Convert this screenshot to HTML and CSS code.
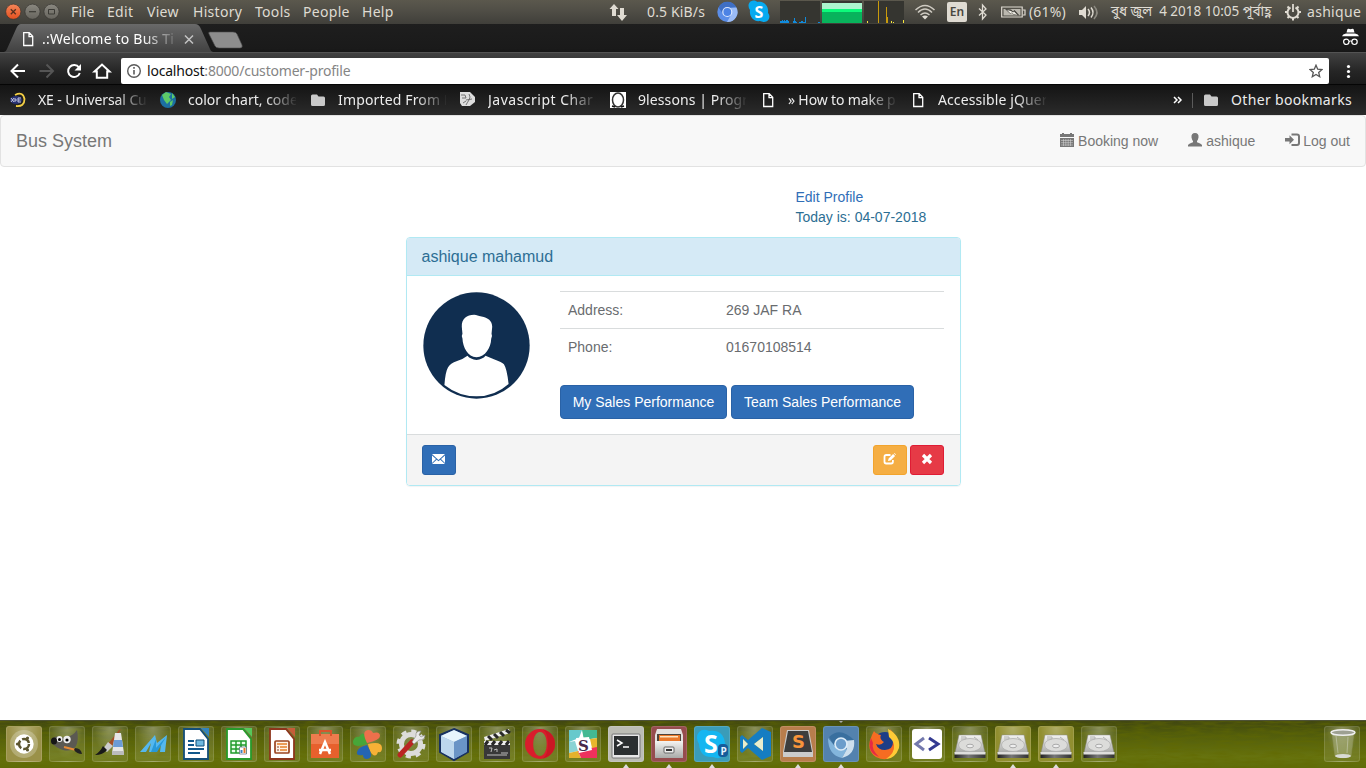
FILE: index.html
```html
<!DOCTYPE html>
<html lang="en">
<head>
<meta charset="utf-8">
<title>.:Welcome to Bus Ticket</title>
<link rel="stylesheet" href="styles.css">
</head>
<body>
<header class="panel">
  <svg class="winbtns" width="71" height="24" viewBox="0 0 71 24"><defs><linearGradient id="or" x2="0" y2="1"><stop stop-color="#f68659"/><stop offset="1" stop-color="#e3501f"/></linearGradient><linearGradient id="gr" x2="0" y2="1"><stop stop-color="#8a8880"/><stop offset="1" stop-color="#66645d"/></linearGradient></defs><circle cx="13.3" cy="11.7" r="7.6" fill="url(#or)" stroke="#3a3731" stroke-width=".7"/><path d="M10.8 9.2l5 5m0-5l-5 5" stroke="#57301f" stroke-width="1.3"/><circle cx="32.5" cy="11.7" r="7.6" fill="url(#gr)" stroke="#35342f" stroke-width=".7"/><path d="M29 11.7h7" stroke="#3b3a35" stroke-width="1.2"/><circle cx="51.5" cy="11.7" r="7.6" fill="url(#gr)" stroke="#35342f" stroke-width=".7"/><path d="M48.5 9.5h6v4.5h-6z" fill="none" stroke="#3b3a35"/></svg>
  <nav class="menus"><span class="m-file">File</span><span class="m-edit">Edit</span><span class="m-view">View</span><span class="m-history">History</span><span class="m-tools">Tools</span><span class="m-people">People</span><span class="m-help">Help</span></nav>
  <div class="tray">
    <svg class="t-net" width="38" height="24" viewBox="0 0 38 24"><path d="M5 4l4.500 5H7v7H3V9H.5zM11 8h4v7h3l-5 6-5-6h3z" fill="#dfdbd2"/></svg>
    <span class="t-speed">0.5 KiB/s</span>
    <svg width="31" height="24" viewBox="0 0 31 24"><circle cx="10.300" cy="12" r="10" fill="#5b8ee8"/><path d="M1.500 7.500A10 10 0 0 1 19.500 7.500H10L6 14z" fill="#3f6fc4"/><path d="M19.500 7.500A10 10 0 0 1 10 22l5-9-2-5z" fill="#9bbcf7"/><circle cx="10.300" cy="12" r="4.500" fill="#4c83e5" stroke="#dce8ff" stroke-width="1.200"/></svg>
    <svg width="32" height="24" viewBox="0 0 32 24"><path d="M2 2C4 0 8 0 9 2c7-1 12 4 11 11 3 3 1 9-4 9-2 0-3-1-4-1C6 22 1 17 2 10 0 7 0 4 2 2z" fill="#07aaf0"/><text x="6.500" y="17.500" class="glyph-s">S</text></svg>
    <svg width="135" height="24" viewBox="0 0 135 24"><path d="M0 1h40v22H0zM42 1h40v22H42zM84 1h40v22H84z" fill="#353530"/><path d="M0 23v-2h2v-1h1v1h1v-1h1v1h1v-1h2v1h1v2zM13 23v-2h1v-3h1v3h1v1h1v1zM19 23v-1h2v-1h2v1h2v1zM25 23v-6h1v6zM38 23v-1h2v1z" fill="#118bdd"/><path d="M42 3h40v6H42z" fill="#acf5ce"/><path d="M42 9h40v3H42z" fill="#0cfb7b"/><path d="M42 12h40v11H42z" fill="#08b35c"/><path d="M98.500 1v22M106.500 7v16M107.500 17v6" stroke="#c99b0c"/><path d="M87.500 21v2M111.500 21v2M113.500 22v1M123.500 20v3" stroke="#f8e73b"/></svg>
    <svg width="32" height="24" viewBox="0 0 32 24" fill="none" stroke="#cfcbc2" stroke-width="1.500"><path d="M.5 10q9.500-9 19 0M3 12.500q7-7 14 0M5.500 15q4.500-4 9 0"/><path d="M7 16.500q3-2 6 0l-3 3z" fill="#dfdbd2" stroke="none"/></svg>
    <span class="keyboard">En</span>
    <svg width="23" height="24" viewBox="0 0 23 24"><path d="M1 8.500l7 6.500-3.500 4V5L8 9l-7 6.500" fill="none" stroke="#dfdbd2" stroke-width="1.300"/></svg>
    <svg width="28" height="24" viewBox="0 0 28 24"><path d="M.7 7h20.500v10H.7zM22 10h2v5h-2" fill="none" stroke="#dfdbd2" stroke-width="1.200"/><path d="M2.500 9h17v6.500h-17z" fill="#bbb8af"/><path d="M4 9l6 .5 2 2 1.500-1.500 5 5.500-6-1-2-2-1 1.500z" fill="#3f3e39"/><path d="M6 10l4 1 2 1.500 1-1 3.500 3.500-4-1-2-1.500-1 1z" fill="#f0eee6"/></svg>
    <span class="t-batt">(61%)</span>
    <svg width="32" height="24" viewBox="0 0 32 24"><path d="M0 10h3l4-4v13l-4-4H0z" fill="#dfdbd2"/><path d="M9 9q3 3.500 0 7M12 7.500q4 5 0 10" fill="none" stroke="#dfdbd2" stroke-width="1.500"/><path d="M15 6q6 6.500 0 13" fill="none" stroke="#8b8980" stroke-width="1.500"/></svg>
    <span class="t-date">বুধ জুল&nbsp; 4 2018 10:05 পূর্বাহ্ণ</span>
    <svg width="22" height="24" viewBox="0 0 22 24" fill="none" stroke="#dfdbd2"><path d="M5.500 7.500a5.500 5.500 0 1 0 5 0" stroke-width="2"/><path d="M8 4v8" stroke-width="1.800"/><path d="M0 12h3M13 12h3M2.500 6.500l2 2M13.500 6.500l-2 2M2.500 18l2-2M13.500 18l-2-2M8 17.500v3" stroke-width="2"/></svg>
    <span class="t-user">ashique</span>
  </div>
</header>

<section class="tabstrip">
  <svg class="tabshape" width="250" height="28" viewBox="0 0 250 28"><defs><linearGradient id="tb" x2="0" y2="1"><stop stop-color="#696969"/><stop offset="1" stop-color="#414141"/></linearGradient></defs><path d="M4 28q2 0 3-3l9-20q2-5 5-5h174q4 0 6 5l9 20q1 3 3 3z" fill="url(#tb)"/><path d="M210 8h23q3 0 4 2l5 11q1 3-2 3h-21q-3 0-4-2l-6-12q-1-2 1-2z" fill="#8d8d8d" stroke="#4b4b4b" stroke-width=".6"/></svg>
  <svg class="tabpage" width="19" height="28" viewBox="0 0 19 28"><path d="M.7 8.700h5.500l3.500 3.500v9.300h-9zM6 8.700v4h4" fill="none" stroke="#fff" stroke-width="1.300"/></svg>
  <span class="tabtitle">.:Welcome to Bus Ti</span>
  <svg width="12" height="28" viewBox="0 0 12 28"><path d="M1 11.500l8 8m0-8l-8 8" stroke="#c4c4c4" stroke-width="1.500"/></svg>
  <svg class="incognito" width="18" height="28" viewBox="0 0 18 28"><path d="M4.500 8.500l1-3.500q1.500-.5 3 .3 1.500-.8 3-.3l1 3.500zM0 12.300q.5-2 4-2.800h9q3.500.8 4 2.800z" fill="#fff"/><path d="M7 17.500q1.500-1 3 0" fill="none" stroke="#fff"/><circle cx="4.300" cy="17.800" r="2.700" fill="none" stroke="#fff" stroke-width="1.200"/><circle cx="12.500" cy="17.800" r="2.700" fill="none" stroke="#fff" stroke-width="1.200"/></svg>
</section>

<section class="toolbar">
  <svg width="121" height="33" viewBox="0 0 121 33" fill="none" stroke-width="2"><path d="M25 19H12M18 12.500L11.500 19l6.500 6.500" stroke="#fff"/><path d="M39.500 19H52M46.500 12.500L53 19l-6.500 6.500" stroke="#555"/><path d="M79 15.500a6 6 0 1 0 .8 5.500" stroke="#fff"/><path d="M81 12v6.500h-6.500z" fill="#fff"/><path d="M94.500 19.500l7.500-7 7.500 7h-2.300v6.300H96.800v-6.300z" stroke="#fff"/></svg>
  <div class="address">
    <svg width="26" height="26" viewBox="0 0 26 26"><circle cx="13" cy="13" r="6.300" fill="none" stroke="#5a5a5a" stroke-width="1.400"/><path d="M13 9v1.700M13 12v4.500" stroke="#5a5a5a" stroke-width="1.600"/></svg>
    <span class="url"><b>localhost</b>:8000/customer-profile</span>
    <svg class="star" width="14" height="14" viewBox="0 0 14 14"><path d="M7 1.200l1.700 4 4.300.4-3.300 2.800 1 4.300L7 10.400l-3.700 2.300 1-4.300L1 5.600l4.300-.4z" fill="none" stroke="#555" stroke-width="1.300"/></svg>
  </div>
  <svg width="37" height="33" viewBox="0 0 37 33" fill="#fff"><circle cx="19.500" cy="14.500" r="1.600"/><circle cx="19.500" cy="19.500" r="1.600"/><circle cx="19.500" cy="24.500" r="1.600"/></svg>
</section>

<section class="bookmarks">
  <svg class="fav" width="28" height="30" viewBox="0 0 28 30"><path d="M5 10q8-4 9.500 4 0 8-8.500 7" fill="none" stroke="#f4cf45" stroke-width="1.800"/><ellipse cx="6" cy="15" rx="6" ry="4" fill="#283173"/><path d="M1 13l3 4m0-4l-3 4M11 13H8v4h3M8 15h2.500M5 13v4M5 15h2" stroke="#e2e4f5" stroke-width=".8" fill="none"/></svg><span class="bm w1">XE - Universal Cu</span>
  <svg class="fav" width="28" height="30" viewBox="0 0 28 30"><circle cx="8" cy="15" r="8" fill="#1c6fa2"/><path d="M2 10l4-3 5 2-2 3 2 3-4 4-3-4zM10 17l3-2-1 5-2 1zM12 8l3 4-3 2z" fill="#5dc967"/></svg><span class="bm w2">color chart, code</span>
  <svg class="fav" width="28" height="30" viewBox="0 0 28 30"><path d="M1 11q0-1.500 1.500-1.500H7l1.500 2h5q1.500 0 1.500 1.500v6.500q0 1.500-1.500 1.500h-11Q1 21 1 19.500z" fill="#c9c9c9"/></svg><span class="bm w3">Imported From F</span>
  <svg class="fav" width="28" height="30" viewBox="0 0 28 30"><path d="M0 7h10l5 5v5l-5 4H2l-2-3z" fill="#ddd"/><path d="M1 10h4l1 3H2M9 9q2 3 0 6t-3 5M6 15l6-1M3 18l3-2" stroke="#666" stroke-width=".9" fill="none"/></svg><span class="bm w4">Javascript Char</span>
  <svg class="fav" width="28" height="30" viewBox="0 0 28 30"><path d="M0 7h16v16H0z" fill="#fff"/><ellipse cx="8" cy="15" rx="5.500" ry="7" fill="#fff" stroke="#333" stroke-width="1.500"/><path d="M2 21l3 1M11 22l3-1" stroke="#111" stroke-width="1.500"/></svg><span class="bm w5">9lessons | Progr</span>
  <svg class="fav" width="28" height="30" viewBox="0 0 28 30"><path d="M3.700 8.700h5.500l3.500 3.500v9.300h-9zM9 8.700v4h4" fill="none" stroke="#fff" stroke-width="1.300"/></svg><span class="bm w6">» How to make p</span>
  <svg class="fav" width="28" height="30" viewBox="0 0 28 30"><path d="M3.700 8.700h5.500l3.500 3.500v9.300h-9zM9 8.700v4h4" fill="none" stroke="#fff" stroke-width="1.300"/></svg><span class="bm w7">Accessible jQuer</span>
  <div class="others"><svg width="58" height="30" viewBox="0 0 58 30"><path d="M1 12l3 3-3 3M5 12l3 3-3 3" stroke="#fff" fill="none" stroke-width="1.500"/><path d="M19.500 8v15" stroke="#5b5b5b"/><path d="M31 11q0-1.500 1.500-1.500H37l1.500 2h5q1.500 0 1.500 1.500v6.500q0 1.500-1.500 1.500h-11Q31 21 31 19.500z" fill="#c9c9c9"/></svg><span>Other bookmarks</span></div>
</section>

<main class="page">
  <nav class="navbar">
    <a class="brand">Bus System</a>
    <div class="navlinks">
      <a><svg width="14" height="14" viewBox="0 0 14 14"><path d="M0 1h2V0h2v1h6V0h2v1h2v3H0zM0 5h14v9H0z" fill="#777"/><path d="M1 7.500h12M1 9.700h12M1 12h12M3.500 6v7M5.800 6v7M8.200 6v7M10.500 6v7" stroke="#ddd" stroke-width=".5"/></svg> Booking now</a>
      <a><svg width="14" height="14" viewBox="0 0 14 14"><path d="M7 0q4 0 3.500 4.500Q10 7 9 8v1.200q4.500 1.800 5 2.800V13.500H0V12q.5-1 5-2.800V8Q4 7 3.500 4.500 3 0 7 0z" fill="#777"/></svg> ashique</a>
      <a><svg width="15" height="14" viewBox="0 0 15 14"><path d="M6.500 1.500h5.500q2 0 2 2v6.500q0 2-2 2H6.500" fill="none" stroke="#777" stroke-width="2"/><path d="M0 5h4.500V2.300L9 6.800l-4.500 4.500V8.500H0z" fill="#777"/></svg> Log out</a>
    </div>
  </nav>
  <div class="profile">
    <div class="meta"><a>Edit Profile</a><p>Today is: 04-07-2018</p></div>
    <section class="card">
      <h3>ashique mahamud</h3>
      <div class="cardbody">
        <svg class="avatar" width="107" height="107" viewBox="70 337 320 320"><circle cx="230" cy="497" r="159" fill="#102e50"/><path d="M186 441C185 417 201 405 223 405C231 405 235 409 245 410C264 413 277 423 277 441L275 462Q278 467 274 477C273 504 256 532 230 532C204 532 189 502 188 476Q184 468 188 462Z" fill="#fff"/><path d="M203 528q-12 10-31 15-21 7-27 19-8 13-11 53 43 34 96 34 55 0 96-37-5-46-14-59-5-6-30-15-16-6-25-10-9 11-27 12-18-1-27-12z" fill="#fff"/></svg>
        <div class="details">
          <table><tr><td class="label">Address:</td><td>269 JAF RA</td></tr><tr><td class="label">Phone:</td><td>01670108514</td></tr></table>
          <div class="actions"><button>My Sales Performance</button><button>Team Sales Performance</button></div>
        </div>
      </div>
      <footer>
        <a class="sq blue"><svg width="13" height="12" viewBox="0 0 13 12"><path d="M0 1h13L6.500 7zM0 2.500l4 3.500L0 10zM13 2.500L9 6l4 4zM0 11l4.700-4.300 1.800 1.600 1.800-1.600L13 11z" fill="#fff"/></svg></a>
        <div class="right"><a class="sq yellow"><svg width="13" height="12" viewBox="0 0 13 12"><path d="M7.500 2H3.200Q1.500 2 1.500 3.700v5.100q0 1.700 1.700 1.700h5q1.700 0 1.700-1.700V7" fill="none" stroke="#fff" stroke-width="1.800"/><path d="M5 8l.6-2.500 4.500-4.500 2 2L7.500 7.500zM11 .5l.5-.5 1.500 1.500-.6.500z" fill="#fff"/></svg></a><a class="sq red"><svg width="12" height="12" viewBox="0 0 12 12"><path d="M2 2l8 8m0-8l-8 8" stroke="#fff" stroke-width="3.200"/></svg></a></div>
      </footer>
    </section>
  </div>
</main>

<footer class="dock">
  <svg class="grass" width="1366" height="48"><filter id="grain" x="0" y="0" width="100%" height="100%"><feTurbulence type="fractalNoise" baseFrequency=".06 .35" numOctaves="3" seed="4"/><feColorMatrix values="0 0 0 0 .12 0 0 0 0 .14 0 0 0 0 0 1.200 0 0 0 -.4"/></filter><rect width="1366" height="48" filter="url(#grain)"/></svg>
  <svg class="defs" width="0" height="0"><defs><linearGradient id="metal" x2="0" y2="1"><stop stop-color="#f4f4f2"/><stop offset="1" stop-color="#a9aaa8"/></linearGradient><linearGradient id="edge"><stop stop-color="#222"/><stop offset=".45" stop-color="#777"/><stop offset="1" stop-color="#333"/></linearGradient>
  <g id="disk"><path d="M7 9h22l4 18H3z" fill="url(#metal)" stroke="#888" stroke-width=".5"/><path d="M2.500 27h31v5h-31z" fill="url(#edge)"/><path d="M2.500 26h31v2.500h-31z" fill="#dededc"/><ellipse cx="18" cy="19" rx="11.500" ry="6.500" fill="#dcdcda" stroke="#aaa" stroke-width=".7"/><ellipse cx="18" cy="20" rx="3.500" ry="1.800" fill="#eee" stroke="#999" stroke-width=".8"/><path d="M9 11h5v2H9M22 11l4 3" fill="none" stroke="#b2b2b2"/></g></defs></svg>
  <div class="tiles">
    <i class="tile launcher"><svg viewBox="0 0 36 36"><circle cx="18" cy="18" r="14" fill="#fff" opacity=".24"/><circle cx="18" cy="18" r="9.700" fill="#fff"/><circle cx="18" cy="18" r="5" fill="none" stroke="#5c5530" stroke-width="2.500" stroke-dasharray="8.500 2"/><circle cx="11.500" cy="18" r="1.600" fill="#5c5530"/><circle cx="21.500" cy="12" r="1.600" fill="#5c5530"/><circle cx="21.500" cy="24" r="1.600" fill="#5c5530"/></svg></i>
    <i class="tile"><svg viewBox="0 0 36 36"><path d="M4 12q3-3 8 0l7-2q5 0 9-6 2 10-1 16-4 6-13 4-7-2-11-7-2-3 1-5z" fill="#5b5952"/><circle cx="10.500" cy="13" r="3" fill="#eee"/><circle cx="18" cy="13.500" r="3.700" fill="#eee"/><circle cx="10.500" cy="13.500" r="1.500"/><circle cx="18" cy="14" r="1.600"/><ellipse cx="5" cy="15" rx="3" ry="3.500" fill="#171717"/><path d="M15 21l12 3" stroke="#e68b35" stroke-width="2"/><path d="M26 22q6 0 7 6-5 0-8-4z" fill="#222"/></svg></i>
    <i class="tile"><svg viewBox="0 0 36 36"><path d="M16 18L27 4l2-1-9 17z" fill="#a44e27"/><path d="M16 16l5 4-6 6-4-3z" fill="#ccc"/><path d="M11 20l4 4q-4 5-12 5 5-3 8-9z" fill="#191919"/><path d="M23 7h6l3 20H20z" fill="#e6e6e6"/><path d="M22 14h8l1 7H21z" fill="#6b9bd5"/><path d="M20 25h12v4H20z" fill="#bbb"/></svg></i>
    <i class="tile"><svg viewBox="0 0 36 36"><path d="M5 26L20 9l2 8 10-8-2 17h-5l1-8-9 8h-3l2-9-5 9z" fill="#55b8ee"/><path d="M16 26l5-13v9L31 11l-9 15z" fill="#2799d9"/></svg></i>
    <i class="tile"><svg viewBox="0 0 36 36"><path d="M6 3h16l8 10v20H6z" fill="#fff" stroke="#134e79" stroke-width="1.800"/><path d="M23 2h8v9z" fill="#3283bd"/><path d="M10 15h6M10 19h6M10 23h16M10 27h12" stroke="#12588b" stroke-width="2"/><path d="M18 14h8v6h-8z" fill="#70b9df" stroke="#134e79"/></svg></i>
    <i class="tile"><svg viewBox="0 0 36 36"><path d="M6 3h16l8 10v20H6z" fill="#fff" stroke="#279a2b" stroke-width="1.800"/><path d="M23 2h8v9z" fill="#57c75a"/><path d="M10 15h15v12H10zM15 15v12M20 15v12M10 19h15M10 23h15" fill="#e9ffe9" stroke="#209c2b" stroke-width="1.500"/><path d="M18.500 21h7v7h-7z" fill="#fff" stroke="#567" stroke-width=".7"/><path d="M20.500 24v3" stroke="#3b7fbf" stroke-width="2"/><path d="M23.500 22v5" stroke="#e27826" stroke-width="2"/></svg></i>
    <i class="tile"><svg viewBox="0 0 36 36"><path d="M6 3h16l8 10v20H6z" fill="#fff" stroke="#8d351b" stroke-width="1.800"/><path d="M23 2h8v9z" fill="#c65d39"/><rect x="11" y="15" width="14" height="12" rx="1" fill="#fff2e7" stroke="#9b4420" stroke-width="1.700"/><path d="M13 18h10M16 21h7M16 24h7" stroke="#e6812b" stroke-width="1.500"/><path d="M13 21h2M13 24h2" stroke="#83432a"/></svg></i>
    <i class="tile"><svg viewBox="0 0 36 36"><path d="M4 10h28v22H4z" fill="#e7602d"/><path d="M4 8h28v10H4z" fill="#ee7c4e"/><path d="M13 10V5h11v5" fill="none" stroke="#d8542c" stroke-width="2"/><path d="M13 28l5-12 5 12M12 24h12" fill="none" stroke="#fff" stroke-width="2.500"/></svg></i>
    <i class="tile"><svg viewBox="0 0 36 36"><path d="M17 18Q2 23 3 15q2-5 6-4 3-6 6-2 2 3 2 9z" fill="#47a639"/><path d="M17 17Q11 5 18 4q4 0 5 3 7-2 7 3 0 4-13 7z" fill="#ee704c"/><path d="M18 18q14-3 14 4 0 5-4 4-2 6-6 2-3-3-4-10z" fill="#f7b136"/><path d="M17 19q8 13 0 14-4 0-4-4-7 1-6-3 1-5 10-7z" fill="#2465b2"/></svg></i>
    <i class="tile"><svg viewBox="0 0 36 36"><circle cx="18" cy="18" r="9.500" fill="none" stroke="#dcdcda" stroke-width="5"/><circle cx="18" cy="18" r="12.500" fill="none" stroke="#dcdcda" stroke-width="4" stroke-dasharray="5 4.800"/><path d="M7 29l12-13" stroke="#ba2422" stroke-width="5" stroke-linecap="round"/><path d="M19 16l4-6q-1-5 5-5l-2 4 2 2 4-2q0 5-6 5l-5 4z" fill="#e9e9e9" stroke="#888" stroke-width=".6"/></svg></i>
    <i class="tile"><svg viewBox="0 0 36 36"><path d="M18 3l14 6v17l-14 8-14-8V9z" fill="#8eb4d8" stroke="#183160" stroke-width="2"/><path d="M5 10l13-6 13 6-13 6z" fill="#e8f5fc"/><path d="M18 16l13-6v16l-13 7z" fill="#6a94c6"/><path d="M5 10l13 6v17L5 26z" fill="#bdd7ed"/></svg></i>
    <i class="tile"><svg viewBox="0 0 36 36"><path d="M5 15h26v18H5z" fill="#383838"/><path d="M5 11l25-8 1 4-25 8z" fill="#eee"/><path d="M9 10l4 4M15 8l4 4M21 6l4 4M27 4l4 3" stroke="#282828" stroke-width="3"/><path d="M5 15h26v4H5z" fill="#eee"/><path d="M9 15l-3 4M16 15l-3 4M23 15l-3 4M30 15l-3 4" stroke="#282828" stroke-width="3"/><path d="M10 22h3l-1 4M15 24l3-1v3M22 27h7M8 29h20" fill="none" stroke="#ccc" stroke-width=".9"/></svg></i>
    <i class="tile"><svg viewBox="0 0 36 36"><path d="M18 3a15 15 0 1 1 0 30a15 15 0 1 1 0-30M18 6c-9 0-9 24 0 24s9-24 0-24z" fill="#d91c2c" fill-rule="evenodd"/><path d="M21 3.300q12 4 12 14.700T21 32.700q5-4 5-14.700T21 3.300z" fill="#c91824"/></svg></i>
    <i class="tile"><svg viewBox="0 0 36 36"><path d="M4 4h28v28H4z" fill="#fff"/><path d="M4 4h13l-3 8-10 4z" fill="#67c9cc"/><path d="M17 4h15v8l-13 2z" fill="#43b993"/><path d="M4 16l6-1 3 10-9 2z" fill="#8ad3d4"/><path d="M4 27l9-2 3 7H4z" fill="#e3b22d"/><path d="M13 25l12-3 7-2v12H16z" fill="#ef315d"/><path d="M25 13l7-1v9l-5 1z" fill="#e7b62e"/><path d="M11 12l13-1 3 13-13 3z" fill="#fff"/><text x="13" y="25" class="slack">S</text></svg></i>
    <i class="tile terminal on"><svg viewBox="0 0 36 36"><rect x="4" y="8" width="28" height="24" rx="1" fill="#e7e7e7" stroke="#777"/><path d="M6 10h24v19H6z" fill="#2b2f30"/><path d="M9 14l5 3-5 3M15 21h6" stroke="#fff" fill="none" stroke-width="1.500"/></svg></i>
    <i class="tile files on"><svg viewBox="0 0 36 36"><path d="M6 3h24l2 6v22H4V9z" fill="#e2e2e0"/><path d="M6 8h24v7H6z" fill="#4e443b"/><path d="M8 9h21v6H8z" fill="#ea792b"/><path d="M9 10h18v1.500H9z" fill="#ffe4be"/><path d="M4 15h28v17H4z" fill="url(#metal)"/><rect x="13" y="21" width="10" height="6" rx="1" fill="#eee" stroke="#666"/><path d="M15 24h6" stroke="#333" stroke-width="2"/></svg></i>
    <i class="tile skype on"><svg viewBox="0 0 36 36"><path d="M5 6q4-4 10-1 14-2 16 12 3 6 0 12-5 5-12 2Q6 32 5 18 1 11 5 6z" fill="#15b6f1"/><text x="10" y="27" class="bigs">S</text><rect x="24" y="18" width="10" height="13" rx="4" fill="#155b9b"/><text x="26.500" y="28.500" class="smallp">P</text></svg></i>
    <i class="tile"><svg viewBox="0 0 36 36"><path d="M25 2l9 4v24l-9 4-14-12-6 5-2-2V11l2-2 6 5zM6 13v10l5-5zM26 11l-9 7 9 7z" fill="#157dc2" fill-rule="evenodd"/><path d="M6 13l5 5-5 5zM26 11v14l-9-7z" fill="#e8edce"/></svg></i>
    <i class="tile sublime on"><svg viewBox="0 0 36 36"><path d="M7 4h22l4 22v5H3v-5z" fill="#cbcbcb"/><path d="M8 5h20l4 21H4z" fill="#3d3d3d"/><text x="12" y="22" class="sublime-s">S</text></svg></i>
    <i class="tile chromium on top"><svg viewBox="0 0 36 36"><path d="M6 11Q17 0 31 14H18q-5 1-6 7z" fill="#396f9f"/><path d="M5 12q0 17 14 20l5-9-9 1z" fill="#83b5dc"/><path d="M31 14q2 14-12 18l5-9-2-8z" fill="#cddfed"/><circle cx="18" cy="18" r="6" fill="#6c9dcb" stroke="#ddecf8" stroke-width="1.700"/></svg></i>
    <i class="tile"><svg viewBox="0 0 36 36"><circle cx="19" cy="19" r="13" fill="#1d3e87"/><path d="M6 9Q-1 24 10 31q12 6 20-4 6-12-6-24 1 5 3 10 1 11-8 11-7 0-9-6 5 2 8-2-5-3-3-7-5-1-7-4z" fill="#f66c22"/><path d="M22 3q13 7 11 19-4 11-13 11 9-6 8-14-1-5-5-8z" fill="#fecb36"/><path d="M5 12q-5 14 8 19-8-8-6-14z" fill="#e62b44"/></svg></i>
    <i class="tile"><svg viewBox="0 0 36 36"><rect x="3" y="3" width="30" height="30" rx="3" fill="#fff"/><path d="M15 12l-8 6 8 6" fill="none" stroke="#7379ad" stroke-width="3"/><path d="M20 12l9 6-9 6" fill="none" stroke="#343a91" stroke-width="3"/></svg></i>
    <i class="tile"><svg viewBox="0 0 36 36"><use href="#disk"/></svg></i>
    <i class="tile diskon on"><svg viewBox="0 0 36 36"><use href="#disk"/></svg></i>
    <i class="tile diskon on"><svg viewBox="0 0 36 36"><use href="#disk"/></svg></i>
    <i class="tile"><svg viewBox="0 0 36 36"><use href="#disk"/></svg></i>
  </div>
  <i class="tile"><svg viewBox="0 0 36 36"><path d="M8 7h22l-3 23q-8 4-16 0z" fill="#dce0d2" opacity=".28" stroke="#ccc" stroke-width=".6"/><ellipse cx="19" cy="6.500" rx="12" ry="2.800" fill="#9da092" stroke="#eee" stroke-width="1.500"/><ellipse cx="19" cy="30" rx="8" ry="2" fill="#d9dbd4"/><path d="M12 10l2 17M24 11l-1 16" stroke="#e4e6dd" opacity=".4"/></svg></i>
</footer>
</body>
</html>
```
FILE: styles.css
```css
* { box-sizing: border-box; }
body { margin: 0; width: 1366px; height: 768px; overflow: hidden; display: flex; flex-direction: column; background: #fff; font-family: "Liberation Sans", Arial, sans-serif; font-size: 14px; line-height: 20px; }
svg { display: block; flex: none; }
.panel, .tabstrip, .toolbar, .bookmarks { font-family: "Noto Sans", "Noto Sans Bengali", sans-serif; flex: none; display: flex; white-space: nowrap; color: #fff; }

.panel { height: 24px; background: linear-gradient(#5b584d, #514f47 40%, #403f3a); color: #dfdbd2; line-height: 23px; justify-content: space-between; }
.menus { display: flex; margin-right: auto; letter-spacing: .3px; }
.menus span { flex: none; }
.m-file { width: 36px; }
.m-edit { width: 40px; }
.m-view { width: 46px; }
.m-history { width: 62px; }
.m-tools { width: 48px; }
.m-people { width: 59px; }
.m-help { width: 36px; }
.tray { display: flex; width: 757px; }
.tray span { flex: none; }
.t-speed { width: 70px; letter-spacing: .15px; }
.keyboard { width: 20px; height: 20px; margin: 2px 11px 0 0; border-radius: 2px; background: #dfdbd2; color: #4a4841; font-size: 12px; line-height: 20px; text-align: center; font-weight: 600; }
.t-batt { width: 50px; letter-spacing: .15px; }
.t-date { width: 174px; font-size: 13.500px; }
.t-user { width: 59px; letter-spacing: .3px; }
.glyph-s { font: bold 16px "Open Sans", sans-serif; fill: #fff; }

.tabstrip { height: 28px; position: relative; background: linear-gradient(#1e1e1e, #1a1a1a 88%, #151515); line-height: 29px; padding-left: 23px; }
.tabstrip > * { position: relative; }
.tabstrip > .tabshape { position: absolute; left: 0; top: 0; }
.tabtitle { width: 142px; -webkit-mask-image: linear-gradient(90deg, #000 100px, transparent 138px); mask-image: linear-gradient(90deg, #000 100px, transparent 138px); letter-spacing: .2px; }
.incognito { margin: 0 6px 0 auto; }

.toolbar { height: 33px; background: linear-gradient(#414141, #252525 60%, #1b1b1b); border-top: 1px solid #535353; border-bottom: 1px solid #050505; }
.toolbar > svg { margin-top: -1px; }
.address { width: 1208px; height: 26px; margin-top: 5px; background: #fff; border-radius: 2px; display: flex; line-height: 26px; }
.url { color: #858585; letter-spacing: -.2px; }
.url b { color: #111; font-weight: 400; }
.star { margin: 6px 6px 0 auto; }

.bookmarks { height: 30px; background: linear-gradient(#141414, #2b2b2b); line-height: 30px; padding-left: 10px; color: #ececec; }
.fav { width: 28px; }
.bm { flex: none; width: 108px; margin-right: 14px; -webkit-mask-image: linear-gradient(90deg, #000 78px, transparent 110px); mask-image: linear-gradient(90deg, #000 78px, transparent 110px); }
.w1 { letter-spacing: -.1px; }
.w3 { letter-spacing: .15px; }
.w4 { letter-spacing: .5px; }
.w5 { letter-spacing: .1px; }
.w6 { word-spacing: -.5px; }
.w7 { letter-spacing: .1px; }
.others { display: flex; width: 193px; margin-left: auto; letter-spacing: .34px; }

.page { flex: 1; min-height: 0; }
.navbar { height: 52px; background: #f8f8f8; border: 1px solid #e2e2e2; border-radius: 4px; display: flex; justify-content: space-between; align-items: center; color: #777; padding: 0 15px; }
.brand { font-size: 18px; }
.navlinks { display: flex; gap: 30px; }
.navlinks a { display: flex; gap: 4px; }
.navlinks a:last-child { gap: 3px; }
.navlinks svg { margin-top: 2px; }
.profile { width: 555px; margin: 20px auto 0 406px; }
.meta { padding-left: 389.500px; color: #2c6e93; }
.meta a { color: #306eb7; }
.meta p { margin: 0 0 10px; }
.card { border: 1px solid #b1e9f3; border-radius: 4px; overflow: hidden; box-shadow: 0 1px 1px rgba(0, 0, 0, .05); }
.card h3 { margin: 0; height: 38px; padding: 9px 14.500px; border-bottom: 1px solid #b1e9f3; background: #d5eaf6; color: #2d6e94; font-size: 16px; line-height: 20px; font-weight: 400; }
.cardbody { padding: 16px 16px 15px; display: flex; height: 158px; }
.avatar { margin: 0 30px 0 0; }
.details { width: 384px; margin-top: -1px; }
table { width: 384px; border-collapse: collapse; margin-bottom: 19px; color: #696c6f; }
td { padding: 8px; height: 37px; border-top: 1px solid #d9dcdd; }
.label { width: 158px; }
.actions { display: flex; gap: 4px; }
button { width: 167px; height: 34px; padding: 0; border: 1px solid #2a62a6; border-radius: 4px; background: #306eb7; color: #fff; font: 14px "Liberation Sans", Arial, sans-serif; }
button + button { width: 183px; }
.card footer { display: flex; justify-content: space-between; height: 51px; border-top: 1px solid #d9dcdd; background: #f4f4f4; padding: 10px 16px 10px 15px; }
.right { display: flex; gap: 3px; }
.sq { width: 34px; height: 30px; border-radius: 3px; display: flex; align-items: center; justify-content: center; padding: 0 1px 2px 0; }
.red { padding-right: 0; }
.blue { background: #306eb7; border: 1px solid #2a62a6; }
.yellow { background: #f5ae43; border: 1px solid #f2a42d; }
.red { background: #e63a46; border: 1px solid #df1c34; }

.dock { height: 48px; flex: none; position: relative; background: linear-gradient(#414710 0, #505b0b 12px, #67730e 36px, #5f6d09); display: flex; justify-content: space-between; padding: 5px 6px 0; overflow: hidden; border-top: 1px solid #4d5137; }
.grass, .defs { position: absolute; left: 0; top: 0; }
.tiles { display: flex; gap: 7px; }
.tile { position: relative; flex: none; width: 36px; height: 36px; border: 1px solid rgba(255, 255, 255, .13); border-radius: 3px; background: radial-gradient(ellipse at 50% 0, rgba(255, 255, 255, .34), rgba(255, 255, 255, .1) 65%); }
.tile svg { width: 36px; height: 36px; margin: -1px; }
.launcher { background-color: #8f8533; }
.terminal { background: #bcbdb5; }
.files { background: #964c4e; }
.skype { background: #3a9cb9; }
.sublime { background: #b87d4c; }
.chromium { background: #5382ae; }
.diskon { background-color: #858219; }
.on::after, .top::before { content: ""; position: absolute; left: 14px; bottom: -7px; border: 3px solid transparent; border-top: 0; border-bottom: 4px solid #ddd; }
.top::before { bottom: auto; top: -7px; border-bottom: 0; border-top: 3px solid #aaa; }
.slack { font: bold 15px "DejaVu Serif", serif; fill: #482849; }
.bigs { font: bold 25px "Open Sans", sans-serif; fill: #fff; }
.smallp { font: bold 10px "Open Sans", sans-serif; fill: #e7f4ff; }
.sublime-s { font: bold 18px "DejaVu Sans", sans-serif; fill: #f7943b; }
```
